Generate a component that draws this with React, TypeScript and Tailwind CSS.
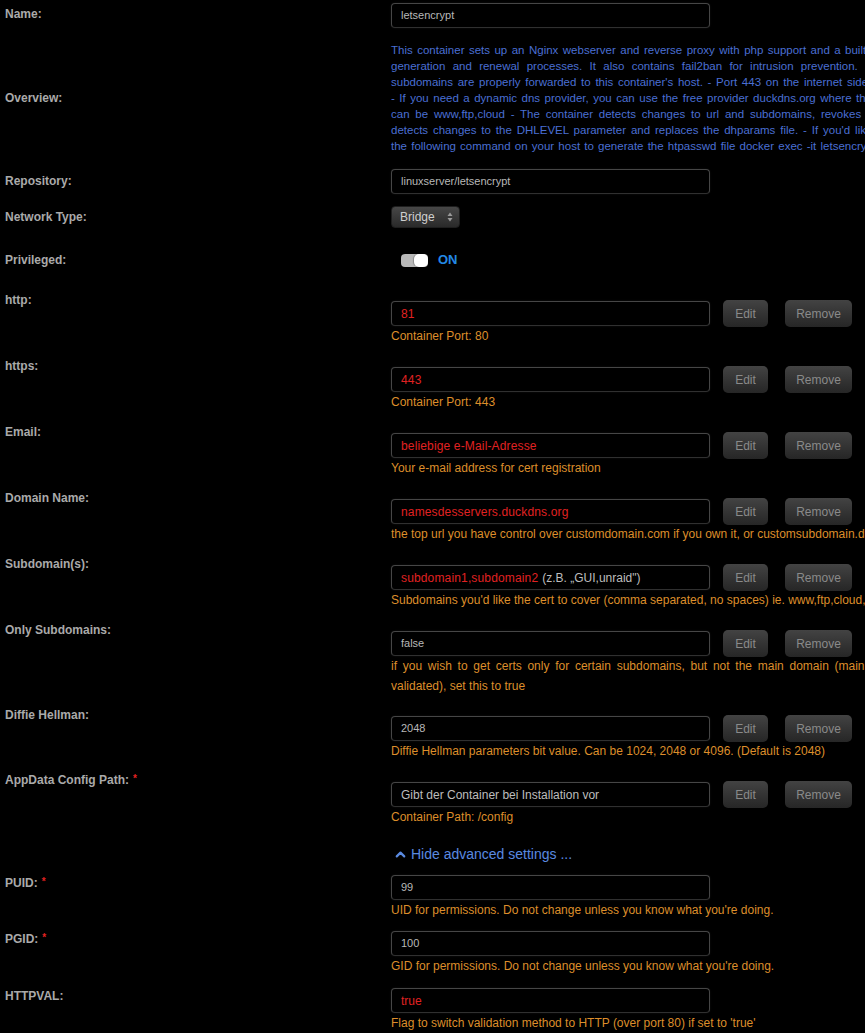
import type { ReactNode } from 'react';
import { ChevronUp } from 'lucide-react';

// Docker template form (unRAID dark theme): label column on the left, inputs + hints on the right.

const ORANGE = 'text-[#dd8e2b]';

function Row({ label, req, lt, ct, children }: { label: string; req?: boolean; lt: string; ct: string; children: ReactNode }) {
  return (
    <div className="flex">
      <div className={`w-[386px] shrink-0 text-[12px] leading-3 font-bold text-[#aaaaaa] ${lt}`}>
        {label}
        {req && <span className="ml-[4px] align-top text-[10px] leading-none text-[#e32222]">*</span>}
      </div>
      <div className={`min-w-0 flex-1 ${ct}`}>{children}</div>
    </div>
  );
}

function Input({ children }: { children: ReactNode }) {
  return (
    <div className="flex h-[25px] w-[319px] shrink-0 items-center overflow-hidden whitespace-nowrap rounded-[4px] border border-[#464646] border-b-[#303030] bg-black pl-[9px] shadow-[0_0_2px_rgba(255,255,255,0.08)]">
      {children}
    </div>
  );
}

const plain = 'text-[11px] text-[#b8b8b8]';
const red = 'text-[12px] tracking-[0.15px] text-[#e02222]';
const grey = 'text-[12px] text-[#bdbdbd]';

function Btn({ w, ml, children }: { w: string; ml: string; children: ReactNode }) {
  return (
    <div className={`flex h-[27px] shrink-0 items-center justify-center rounded-[5px] bg-linear-to-b from-[#434343] to-[#262626] text-[12px] text-[#8a8a8a] shadow-[0_1px_1px_rgba(0,0,0,0.6)] ${w} ${ml}`}>
      {children}
    </div>
  );
}

function Config({ value, desc }: { value: ReactNode; desc: ReactNode }) {
  return (
    <>
      <div className="flex h-[25px] items-center">
        <Input>{value}</Input>
        <Btn w="w-[45px]" ml="ml-[13px]">Edit</Btn>
        <Btn w="w-[67px]" ml="ml-[17px]">Remove</Btn>
      </div>
      <div className={`whitespace-nowrap text-[12px] leading-5 ${ORANGE}`}>{desc}</div>
    </>
  );
}

function Plain({ value, desc }: { value: ReactNode; desc: string }) {
  return (
    <>
      <Input>{value}</Input>
      <div className={`whitespace-nowrap text-[12px] leading-5 ${ORANGE}`}>{desc}</div>
    </>
  );
}

function Overview() {
  return (
    <div className="whitespace-nowrap text-[11.5px] leading-4 text-[#4a6fd3]">
      <div className="[word-spacing:1.25px]">This container sets up an Nginx webserver and reverse proxy with php support and a built-in letsencrypt client that automates free SSL server certificate</div>
      <div className="[word-spacing:4.1px]">generation and renewal processes. It also contains fail2ban for intrusion prevention. Before running this container, make sure that the url and</div>
      <div className="[word-spacing:1.5px]">subdomains are properly forwarded to this container's host. - Port 443 on the internet side of the router should be forwarded to this container's port 443</div>
      <div className="[word-spacing:1.3px]">- If you need a dynamic dns provider, you can use the free provider duckdns.org where the url will be yoursubdomain.duckdns.org and the subdomains</div>
      <div className="[word-spacing:2.6px]">can be www,ftp,cloud - The container detects changes to url and subdomains, revokes existing certs and generates new ones during start. It also</div>
      <div className="[word-spacing:1.7px]">detects changes to the DHLEVEL parameter and replaces the dhparams file. - If you'd like to password protect your sites, you can use htpasswd. Run</div>
      <div className="[word-spacing:1px]">the following command on your host to generate the htpasswd file docker exec -it letsencrypt htpasswd -c /config/nginx/.htpasswd &lt;username&gt;</div>
    </div>
  );
}

export default function App() {
  return (
    <div className="h-[1033px] w-full overflow-hidden bg-black pl-[5px] font-['Liberation_Sans',Arial,sans-serif]">
      <Row label="Name:" lt="pt-[8px]" ct="pt-[3px]">
        <Input><span className={plain}>letsencrypt</span></Input>
      </Row>
      <Row label="Overview:" lt="pt-[64px]" ct="pt-[14px]">
        <Overview />
      </Row>
      <Row label="Repository:" lt="pt-[21px]" ct="pt-[15px]">
        <Input><span className={plain}>linuxserver/letsencrypt</span></Input>
      </Row>
      <Row label="Network Type:" lt="pt-[17px]" ct="pt-[12px]">
        <div className="flex h-[22px] w-[69px] items-center justify-between rounded-[4px] border border-[#1e1e1e] bg-linear-to-b from-[#474747] to-[#2a2a2a] pl-[8px] pr-[6px] text-[12px] text-[#cfcfcf]">
          Bridge
          <svg width="6" height="10" viewBox="0 0 6 10" className="fill-[#9a9a9a]">
            <path d="M3 0.5 L5.5 4 H0.5 Z" />
            <path d="M3 9.5 L5.5 6 H0.5 Z" />
          </svg>
        </div>
      </Row>
      <Row label="Privileged:" lt="pt-[26px]" ct="pt-[26px]">
        <div className="flex h-[12px] items-center">
          <div className="ml-[10px] flex h-[13px] w-[27px] items-center justify-end rounded-[4px] bg-[#b9b9b9]">
            <div className="h-[13px] w-[14px] rounded-[5px] bg-white shadow-[-1px_0_1px_rgba(0,0,0,0.25)]" />
          </div>
          <span className="ml-[10px] text-[13px] font-semibold leading-3 text-[#2388e6]">ON</span>
        </div>
      </Row>
      <Row label="http:" lt="pt-[28px]" ct="pt-[35px]">
        <Config value={<span className={red}>81</span>} desc="Container Port: 80" />
      </Row>
      <Row label="https:" lt="pt-[14px]" ct="pt-[21px]">
        <Config value={<span className={red}>443</span>} desc="Container Port: 443" />
      </Row>
      <Row label="Email:" lt="pt-[14px]" ct="pt-[21px]">
        <Config value={<span className={red}>beliebige e-Mail-Adresse</span>} desc="Your e-mail address for cert registration" />
      </Row>
      <Row label="Domain Name:" lt="pt-[14px]" ct="pt-[21px]">
        <Config
          value={<span className={red}>namesdesservers.duckdns.org</span>}
          desc="the top url you have control over customdomain.com if you own it, or customsubdomain.duckdns.org if using duckdns"
        />
      </Row>
      <Row label="Subdomain(s):" lt="pt-[14px]" ct="pt-[21px]">
        <Config
          value={
            <>
              <span className={red}>subdomain1,subdomain2</span>
              <span className="ml-[4px] text-[12px] text-[#bdbdbd]">(z.B. „GUI,unraid")</span>
            </>
          }
          desc="Subdomains you'd like the cert to cover (comma separated, no spaces) ie. www,ftp,cloud,mail"
        />
      </Row>
      <Row label="Only Subdomains:" lt="pt-[14px]" ct="pt-[21px]">
        <Config
          value={<span className={plain}>false</span>}
          desc={
            <>
              <div className="[word-spacing:2.4px]">if you wish to get certs only for certain subdomains, but not the main domain (main domain may be hosted on another machine and cannot be</div>
              <div>validated), set this to true</div>
            </>
          }
        />
      </Row>
      <Row label="Diffie Hellman:" lt="pt-[13px]" ct="pt-[20px]">
        <Config value={<span className={plain}>2048</span>} desc="Diffie Hellman parameters bit value. Can be 1024, 2048 or 4096. (Default is 2048)" />
      </Row>
      <Row label="AppData Config Path:" req lt="pt-[13px]" ct="pt-[21px]">
        <Config value={<span className={grey}>Gibt der Container bei Installation vor</span>} desc="Container Path: /config" />
      </Row>

      <div className="ml-[388px] mt-[17px] flex items-center gap-[3px] text-[14px] leading-5 text-[#5a8ae0]">
        <ChevronUp size={15} strokeWidth={3.5} />
        <span>Hide advanced settings ...</span>
      </div>

      <Row label="PUID:" req lt="pt-[13px]" ct="pt-[11px]">
        <Plain value={<span className={plain}>99</span>} desc="UID for permissions. Do not change unless you know what you're doing." />
      </Row>
      <Row label="PGID:" req lt="pt-[13px]" ct="pt-[11px]">
        <Plain value={<span className={plain}>100</span>} desc="GID for permissions. Do not change unless you know what you're doing." />
      </Row>
      <Row label="HTTPVAL:" lt="pt-[14px]" ct="pt-[12px]">
        <Plain value={<span className="text-[12px] text-[#e02222]">true</span>} desc="Flag to switch validation method to HTTP (over port 80) if set to 'true'" />
      </Row>
    </div>
  );
}
